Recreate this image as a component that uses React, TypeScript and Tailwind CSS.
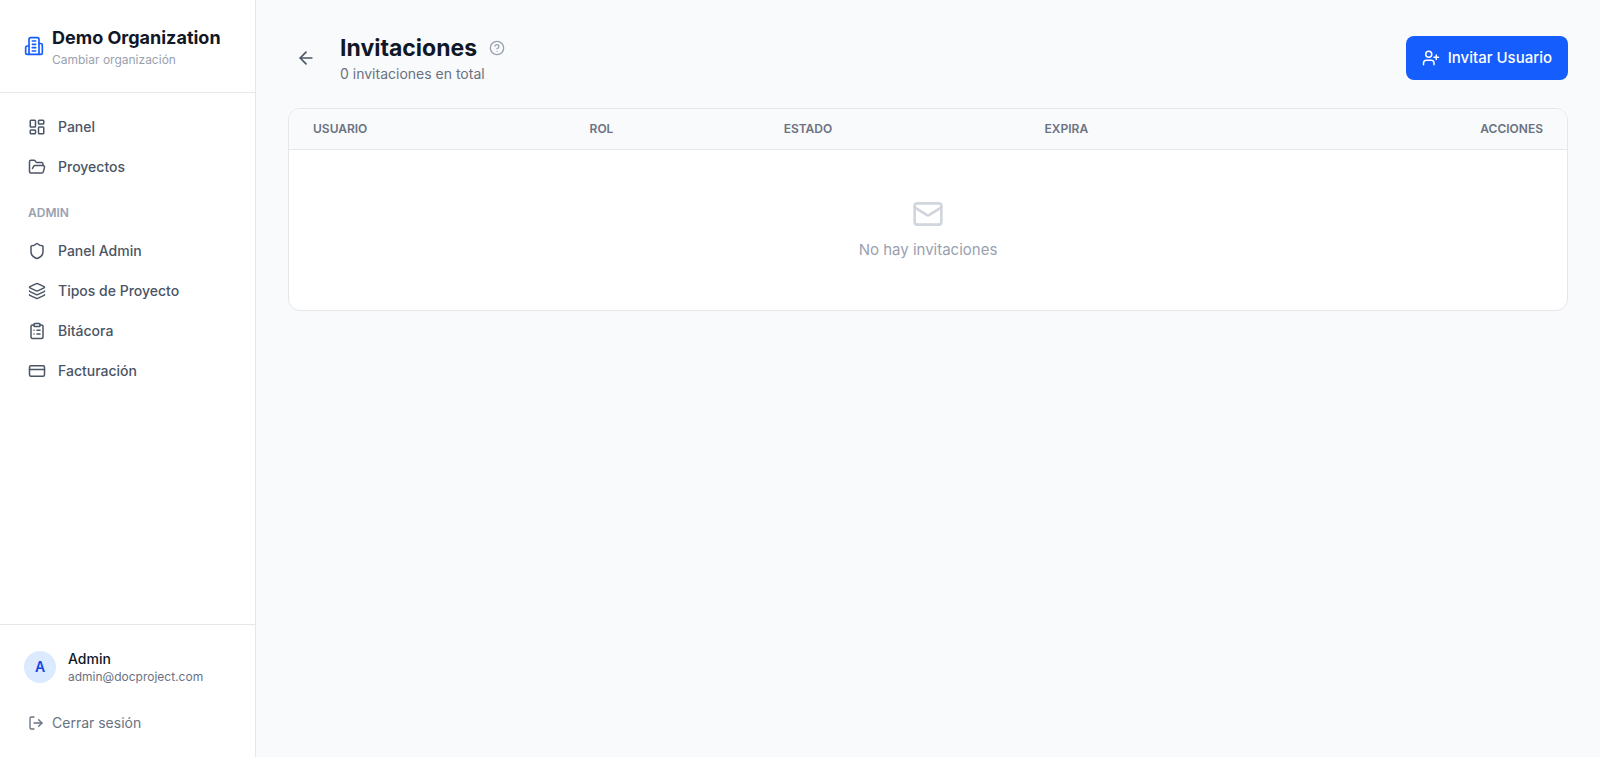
import React from 'react'
import {
  ArrowLeft, CircleHelp, ClipboardList, CreditCard, FolderOpen,
  Layers, LayoutDashboard, LogOut, Mail, Shield, UserPlus,
} from 'lucide-react'

const mainLinks = [
  { label: 'Panel', icon: LayoutDashboard },
  { label: 'Proyectos', icon: FolderOpen },
]

const adminLinks = [
  { label: 'Panel Admin', icon: Shield },
  { label: 'Tipos de Proyecto', icon: Layers },
  { label: 'Bitácora', icon: ClipboardList },
  { label: 'Facturación', icon: CreditCard },
]

const BuildingIcon = () => (
  <svg
    viewBox="0 0 24 24"
    fill="none"
    stroke="currentColor"
    strokeWidth="2"
    strokeLinecap="round"
    strokeLinejoin="round"
    aria-hidden="true"
    className="h-5 w-5 shrink-0 text-blue-600"
  >
    <path d="M6 22V4a2 2 0 0 1 2-2h8a2 2 0 0 1 2 2v18Z" />
    <path d="M6 12H4a2 2 0 0 0-2 2v6a2 2 0 0 0 2 2h2" />
    <path d="M18 9h2a2 2 0 0 1 2 2v9a2 2 0 0 1-2 2h-2" />
    <path d="M10 6h4" />
    <path d="M10 10h4" />
    <path d="M10 14h4" />
    <path d="M10 18h4" />
  </svg>
)

const NavLink = ({ label, icon: Icon }: { label: string; icon: React.ElementType }) => (
  <a href="#" className="flex items-center gap-3 rounded-lg px-3 py-2 text-sm font-medium text-gray-600 hover:bg-gray-100">
    <Icon size={18} />
    {label}
  </a>
)

const Sidebar = () => (
  <aside className="flex w-64 shrink-0 flex-col border-r border-gray-200 bg-white">
    <div className="border-b border-gray-200 p-6">
      <a href="#" className="flex items-center gap-2">
        <BuildingIcon />
        <div>
          <h1 className="text-lg font-bold text-gray-900">Demo Organization</h1>
          <p className="text-xs text-gray-400">Cambiar organización</p>
        </div>
      </a>
    </div>

    <nav className="flex-1 space-y-1 p-4">
      {mainLinks.map((link) => <NavLink key={link.label} {...link} />)}
      <p className="px-3 pt-4 pb-2 text-xs font-semibold text-gray-400 uppercase">Admin</p>
      {adminLinks.map((link) => <NavLink key={link.label} {...link} />)}
    </nav>

    <div className="border-t border-gray-200 p-4">
      <div className="mb-3 flex items-center gap-3 p-2">
        <div className="flex h-8 w-8 items-center justify-center rounded-full bg-blue-100 text-sm font-semibold text-blue-700">A</div>
        <div>
          <p className="text-sm font-medium text-gray-900">Admin</p>
          <p className="text-xs text-gray-500">admin@docproject.com</p>
        </div>
      </div>
      <button type="button" className="flex w-full items-center gap-2 rounded-lg px-3 py-2 text-sm text-gray-500 hover:bg-gray-100">
        <LogOut size={16} />
        Cerrar sesión
      </button>
    </div>
  </aside>
)

const App = () => {
  return (
    <div className="flex min-h-screen bg-gray-50 font-['Inter',sans-serif]">
      <Sidebar />

      <main className="flex-1 p-8">
        <div className="mb-6 flex items-center gap-4">
          <button type="button" aria-label="Volver" className="rounded-lg p-2 text-gray-600 hover:bg-gray-100">
            <ArrowLeft size={20} />
          </button>
          <div className="flex-1">
            <div className="flex items-center gap-3">
              <h2 className="text-[23px] leading-8 font-bold text-gray-900">Invitaciones</h2>
              <button type="button" aria-label="Ayuda" className="text-gray-400">
                <CircleHelp size={16} />
              </button>
            </div>
            <p className="text-sm text-gray-500">0 invitaciones en total</p>
          </div>
          <button type="button" className="flex items-center gap-2 rounded-lg bg-blue-600 px-4 py-2.5 text-[15px] leading-6 font-medium text-white hover:bg-blue-700">
            <UserPlus size={18} />
            Invitar Usuario
          </button>
        </div>

        <div className="overflow-hidden rounded-xl border border-gray-200 bg-white">
          <table className="w-full">
            <thead className="border-b border-gray-200 bg-gray-50">
              <tr className="text-left text-xs text-gray-500 uppercase">
                <th className="px-6 py-3 font-semibold">Usuario</th>
                <th className="px-6 py-3 font-semibold">Rol</th>
                <th className="px-6 py-3 font-semibold">Estado</th>
                <th className="px-6 py-3 font-semibold">Expira</th>
                <th className="px-6 py-3 text-right font-semibold">Acciones</th>
              </tr>
            </thead>
            <tbody>
              <tr>
                <td colSpan={5} className="px-6 py-12 text-center text-[15px] leading-6 text-gray-400">
                  <Mail size={32} className="mx-auto mb-2 text-gray-300" />
                  No hay invitaciones
                </td>
              </tr>
            </tbody>
          </table>
        </div>
      </main>
    </div>
  )
}

export default App
